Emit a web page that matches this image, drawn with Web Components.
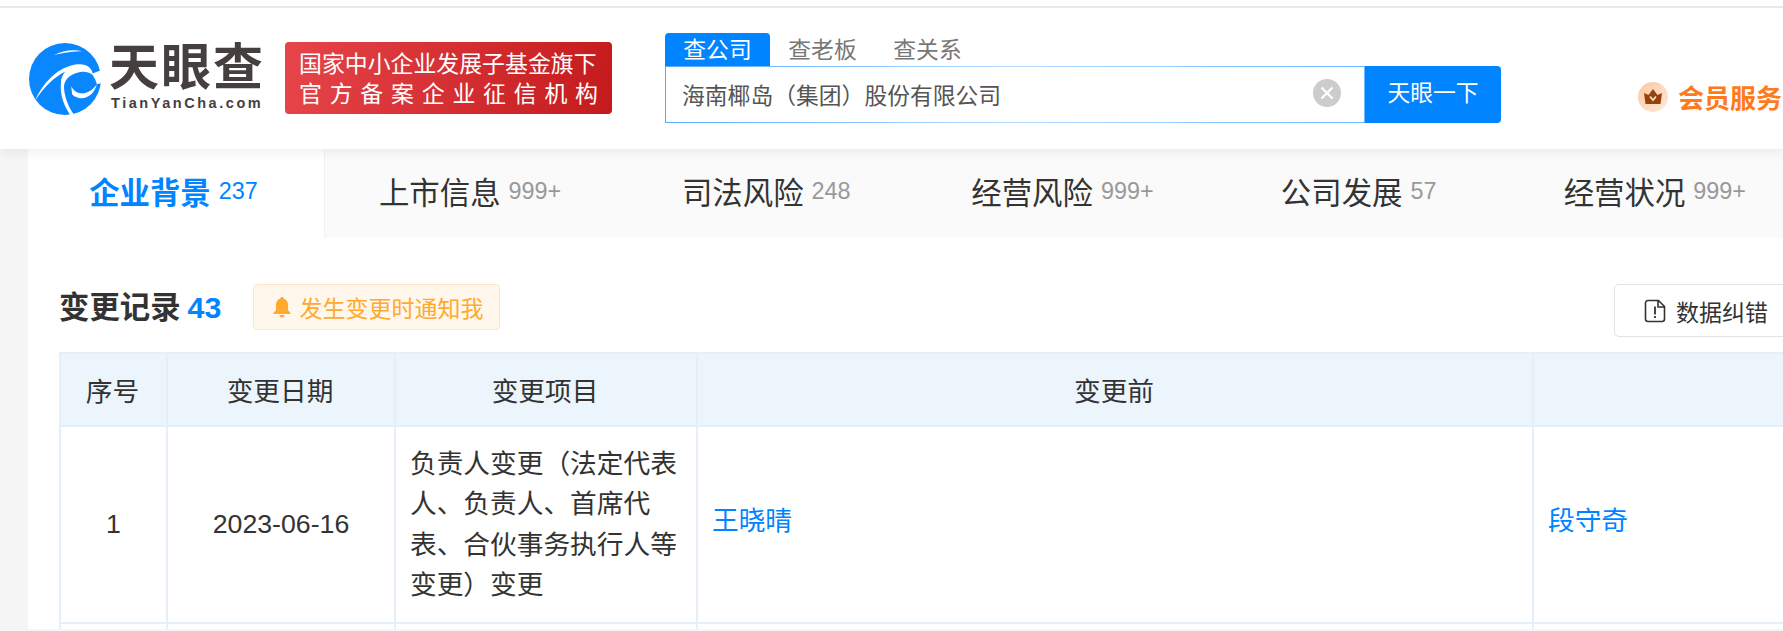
<!DOCTYPE html>
<html lang="zh">
<head>
<meta charset="utf-8">
<title>变更记录</title>
<style>
  html, body { margin: 0; height: 631px; overflow: hidden; }
  body {
    width: 1783px;
    background: #f5f5f5;
    color: #333;
    font-family: "Liberation Sans", "Noto Sans CJK SC", sans-serif;
  }
</style>
</head>
<body>
<tyc-topbar>
  <tyc-logo></tyc-logo>
  <tyc-slogan></tyc-slogan>
  <tyc-search value="海南椰岛（集团）股份有限公司"></tyc-search>
  <tyc-member>会员服务</tyc-member>
</tyc-topbar>
<tyc-page>
  <tyc-tabs>
    <tyc-tab count="237" active>企业背景</tyc-tab>
    <tyc-tab count="999+">上市信息</tyc-tab>
    <tyc-tab count="248">司法风险</tyc-tab>
    <tyc-tab count="999+">经营风险</tyc-tab>
    <tyc-tab count="57">公司发展</tyc-tab>
    <tyc-tab count="999+">经营状况</tyc-tab>
  </tyc-tabs>
  <tyc-section-head count="43">变更记录</tyc-section-head>
  <tyc-change-table></tyc-change-table>
</tyc-page>

<script>
class TycTopbar extends HTMLElement {
  constructor() {
    super();
    this.attachShadow({ mode: 'open' }).innerHTML = `
      <style>
        :host {
          display: block;
          position: relative;
          z-index: 2;
          background: #fff;
          padding-top: 6px;
          box-shadow: 0 2px 12px rgba(0, 0, 0, 0.08);
        }
        .bar {
          display: flex;
          align-items: flex-start;
          height: 143px;
          box-sizing: border-box;
          border-top: 2px solid #e8e8e8;
          padding: 25px 0 0 29px;
        }
      </style>
      <div class="bar"><slot></slot></div>
    `;
  }
}

class TycLogo extends HTMLElement {
  constructor() {
    super();
    this.attachShadow({ mode: 'open' }).innerHTML = `
      <style>
        :host { display: flex; gap: 8px; width: 235px; height: 72px; margin-top: 10px; color: #453f3f; flex: none; }
        svg { width: 72px; height: 72px; flex: none; }
        .words { display: flex; flex-direction: column; }
        .name { font-size: 50px; line-height: 50px; font-weight: 700; letter-spacing: 2px; white-space: nowrap; }
        .site { font-size: 14.5px; line-height: 17px; font-weight: 700; letter-spacing: 2.550px; margin: 2px 0 0 2px; white-space: nowrap; }
      </style>
      <svg viewBox="5 5 70 70">
        <circle cx="40" cy="40" r="35" fill="#0a87ff"/>
        <path fill="#fff" d="M29 17C38 12 48 11 57 13 50 13 38 14 29 17Z"/>
        <path fill="#fff" d="M11 61C19 43 33 29 50 26 60 24 67 29 67 36 63 33 57 32 52 34 45 36 40 40 39 47 39 56 43 67 49 75H45C39 66 35 56 36 44 36 39 38 36 40 33 30 38 20 47 11 61Z"/>
        <path fill="#fff" d="M46 47C52 58 64 55 71 45 68 57 56 63 47 55Z"/>
        <path fill="#fff" d="M66 35L76 31V44L71 45C70 41 68 38 66 35Z"/>
      </svg>
      <div class="words">
        <span class="name">天眼查</span>
        <span class="site">TianYanCha.com</span>
      </div>
    `;
  }
}

class TycSlogan extends HTMLElement {
  constructor() {
    super();
    this.attachShadow({ mode: 'open' }).innerHTML = `
      <style>
        :host {
          display: block;
          flex: none;
          width: 327px;
          height: 72px;
          margin: 9px 0 0 21px;
          box-sizing: border-box;
          padding: 7px 14px 0;
          border-radius: 4px;
          background: linear-gradient(100deg, #e6454a, #c41a1c);
          color: #fff;
          font-size: 22.9px;
          line-height: 30px;
        }
        div { white-space: nowrap; }
        .wide { text-align: justify; text-align-last: justify; white-space: normal; }
      </style>
      <div>国家中小企业发展子基金旗下</div>
      <div class="wide">官 方 备 案 企 业 征 信 机 构</div>
    `;
  }
}

class TycSearch extends HTMLElement {
  constructor() {
    super();
    const shadow = this.attachShadow({ mode: 'open' });
    shadow.innerHTML = `
      <style>
        :host { display: block; flex: none; width: 836px; margin-left: 53px; font-size: 22.8px; }
        .kinds { display: flex; height: 33px; color: #777; }
        .kinds span { width: 105px; text-align: center; line-height: 34px; }
        .kinds .on {
          background: #0084ff;
          color: #fff;
          border-radius: 4px 4px 0 0;
        }
        .row { display: flex; height: 57px; }
        .box {
          flex: 1;
          display: flex;
          align-items: center;
          justify-content: space-between;
          box-sizing: border-box;
          padding: 0 23px 0 16px;
          border: 1px solid;
          border-image: linear-gradient(90deg, #5aa9ff, #b5dcff 50%, #6db8ff) 1;
          color: #555;
        }
        .go {
          width: 136px;
          background: #0084ff;
          color: #fff;
          text-align: center;
          line-height: 55px;
          border-radius: 0 4px 4px 0;
        }
        svg { width: 28px; height: 28px; margin-top: -3px; }
      </style>
      <div class="kinds"><span class="on">查公司</span><span>查老板</span><span>查关系</span></div>
      <div class="row">
        <div class="box">
          <span class="text"></span>
          <svg viewBox="0 0 28 28">
            <circle cx="14" cy="14" r="14" fill="#ccc"/>
            <path d="M8.500 8.500l11 11M19.500 8.500l-11 11" stroke="#fff" stroke-width="2.200"/>
          </svg>
        </div>
        <div class="go">天眼一下</div>
      </div>
    `;
    shadow.querySelector('.text').textContent = this.getAttribute('value');
  }
}

class TycMember extends HTMLElement {
  constructor() {
    super();
    this.attachShadow({ mode: 'open' }).innerHTML = `
      <style>
        :host {
          display: flex;
          align-items: center;
          gap: 10px;
          flex: none;
          margin: 45px 0 0 137px;
          color: #ff7a1a;
          font-size: 26px;
          font-weight: 700;
          white-space: nowrap;
        }
        svg { width: 30px; height: 30px; flex: none; }
      </style>
      <svg viewBox="0 0 30 30">
        <defs>
          <linearGradient id="g" x1="0" y1="0" x2="1" y2="1">
            <stop offset="0" stop-color="#fdc79f"/>
            <stop offset="1" stop-color="#ffeadb"/>
          </linearGradient>
        </defs>
        <circle cx="15" cy="15" r="15" fill="url(#g)"/>
        <path fill="#96420a" d="M6 11l4.500 2L15 7l4.500 6 4.500-2-1.500 11h-15z"/>
        <path fill="none" stroke="#fbdcc4" stroke-width="1.800" d="M12 14.500l3 3.500 3-3.500"/>
      </svg>
      <slot></slot>
    `;
  }
}

class TycPage extends HTMLElement {
  constructor() {
    super();
    this.attachShadow({ mode: 'open' }).innerHTML = `
      <style>
        :host { display: block; margin-left: 28px; background: #fff; height: 480px; overflow: hidden; }
      </style>
      <slot></slot>
    `;
  }
}

class TycTabs extends HTMLElement {
  constructor() {
    super();
    this.attachShadow({ mode: 'open' }).innerHTML = `
      <style>
        :host { display: flex; height: 89px; background: #fafafa; }
      </style>
      <slot></slot>
    `;
  }
}

class TycTab extends HTMLElement {
  constructor() {
    super();
    const shadow = this.attachShadow({ mode: 'open' });
    shadow.innerHTML = `
      <style>
        :host {
          display: flex;
          align-items: center;
          justify-content: center;
          gap: 8px;
          flex: none;
          box-sizing: border-box;
          width: 296.200px;
          height: 87px;
          padding: 0 6px 3px 0;
          font-size: 30.400px;
          color: #333;
          white-space: nowrap;
        }
        :host([active]) {
          background: #fff;
          color: #0084ff;
          font-weight: 700;
          width: 297px;
          height: 89px;
          padding-bottom: 5px;
          box-shadow: inset -1px 0 0 #f2f2f2;
        }
        .count { font-size: 23.400px; color: #999; font-weight: 400; margin-top: 1px; }
        :host([active]) .count { color: #0084ff; }
      </style>
      <slot></slot><span class="count"></span>
    `;
    shadow.querySelector('.count').textContent = this.getAttribute('count');
  }
}

class TycSectionHead extends HTMLElement {
  constructor() {
    super();
    const shadow = this.attachShadow({ mode: 'open' });
    shadow.innerHTML = `
      <style>
        :host {
          display: flex;
          align-items: flex-start;
          height: 114px;
          box-sizing: border-box;
          padding: 46px 0 0 31px;
        }
        .title {
          font-size: 30.400px;
          font-weight: 700;
          line-height: 46px;
          white-space: nowrap;
        }
        .num { color: #0084ff; margin-left: 7px; }
        .notify {
          display: flex;
          align-items: center;
          gap: 7px;
          box-sizing: border-box;
          width: 247px;
          height: 46px;
          margin-left: 32px;
          padding-left: 18px;
          background: #fff7eb;
          border: 1px solid #ffe7c4;
          border-radius: 4px;
          color: #ffa92e;
          font-size: 23px;
          white-space: nowrap;
        }
        .notify svg { width: 20px; height: 22px; flex: none; }
        .fix {
          display: flex;
          align-items: center;
          gap: 10px;
          box-sizing: border-box;
          width: 220px;
          height: 53px;
          margin-left: auto;
          margin-right: -51px;
          padding-left: 29px;
          border: 1px solid #e2e2e2;
          border-radius: 5px;
          font-size: 23px;
          color: #333;
          white-space: nowrap;
        }
        .fix svg { width: 22px; height: 24px; flex: none; }
      </style>
      <div class="title"><slot></slot><span class="num"></span></div>
      <div class="notify">
        <svg viewBox="0 0 20 22">
          <path fill="#ffa92e" d="M10 1c1 0 1.600.7 1.600 1.500C14.700 3.300 16 6 16 9v5l2.500 3v1h-17v-1L4 14V9c0-3 1.300-5.700 4.400-6.500C8.400 1.700 9 1 10 1zM7.500 19h5c0 1.500-1.100 2.500-2.500 2.500S7.500 20.500 7.500 19z"/>
        </svg>
        发生变更时通知我
      </div>
      <div class="fix">
        <svg viewBox="0 0 22 24">
          <path fill="none" stroke="#333" stroke-width="1.600" d="M4 1.500h10.500l6 6V20a2.500 2.500 0 0 1-2.500 2.500H4A2.500 2.500 0 0 1 1.500 20V4A2.500 2.500 0 0 1 4 1.500zM14 1.500V8h6.500"/>
          <path fill="none" stroke="#333" stroke-width="1.800" d="M11 7.500v8M11 17v2"/>
        </svg>
        数据纠错
      </div>
    `;
    shadow.querySelector('.num').textContent = this.getAttribute('count');
  }
}

class TycChangeTable extends HTMLElement {
  constructor() {
    super();
    this.attachShadow({ mode: 'open' }).innerHTML = `
      <style>
        :host { display: block; margin-left: 31px; width: 2309px; font-size: 26.700px; color: #333; }
        table { border-collapse: collapse; table-layout: fixed; width: 100%; }
        th, td { border: 2px solid #e6eff7; }
        th { height: 71px; padding: 0 2px 0 0; background: #edf5fc; font-weight: 400; }
        td { height: 195px; padding: 0 14px; line-height: 40.500px; text-align: center; }
        td.left { text-align: left; }
        td.empty { height: 60px; }
        a { color: #0084ff; text-decoration: none; position: relative; top: -3px; }
      </style>
      <table>
        <colgroup>
          <col style="width:107px"><col style="width:228px"><col style="width:302px"><col style="width:836px"><col style="width:836px">
        </colgroup>
        <tr><th>序号</th><th>变更日期</th><th>变更项目</th><th>变更前</th><th></th></tr>
        <tr>
          <td>1</td>
          <td>2023-06-16</td>
          <td class="left">负责人变更（法定代表人、负责人、首席代表、合伙事务执行人等变更）变更</td>
          <td class="left"><a href="#">王晓晴</a></td>
          <td class="left"><a href="#">段守奇</a></td>
        </tr>
        <tr><td class="empty"></td><td></td><td></td><td></td><td></td></tr>
      </table>
    `;
  }
}

customElements.define('tyc-topbar', TycTopbar);
customElements.define('tyc-logo', TycLogo);
customElements.define('tyc-slogan', TycSlogan);
customElements.define('tyc-search', TycSearch);
customElements.define('tyc-member', TycMember);
customElements.define('tyc-page', TycPage);
customElements.define('tyc-tabs', TycTabs);
customElements.define('tyc-tab', TycTab);
customElements.define('tyc-section-head', TycSectionHead);
customElements.define('tyc-change-table', TycChangeTable);
</script>
</body>
</html>
